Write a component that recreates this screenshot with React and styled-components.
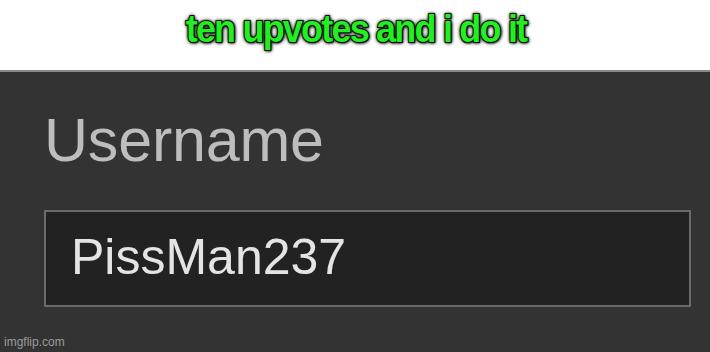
import React from "react";
import styled, { createGlobalStyle } from "styled-components";

const Global = createGlobalStyle`
  html, body { margin: 0; padding: 0; background: #333333; }
  body { width: 710px; height: 352px; overflow: hidden; }
`;

const Frame = styled.div`
  width: 710px;
  height: 352px;
  display: flex;
  flex-direction: column;
  background: #333333;
  position: relative;
  overflow: hidden;
`;

const Header = styled.div`
  background: #ffffff;
  display: flex;
  justify-content: center;
  align-items: flex-start;
  border-bottom: 2px solid #8a8a8a;
  box-sizing: border-box;
  height: 72px;
`;

const Caption = styled.div`
  margin-top: 8px;
  margin-left: 2px;
  font-family: "Liberation Sans Narrow", "Liberation Sans", sans-serif;
  font-weight: 700;
  font-size: 36px;
  letter-spacing: -1.8px;
  color: #22ee22;
  -webkit-text-stroke: 2px #0a2a0a;
  paint-order: stroke fill;
  text-shadow: 0 0 3px #000, 0 0 4px #000, 1px 1px 3px #000;
  white-space: nowrap;
  transform: scaleY(1.08);
`;

const Panel = styled.div`
  flex: 1;
  display: flex;
  flex-direction: column;
  padding: 38px 19px 0 44px;
`;

const Label = styled.div`
  font-family: "Liberation Sans", Arial, sans-serif;
  font-size: 61px;
  line-height: 1;
  color: #bdbdbd;
  letter-spacing: -0.2px;
`;

const Field = styled.div`
  margin-top: 39px;
  height: 97px;
  box-sizing: border-box;
  background: #222222;
  border: 2px solid #6a6a6a;
  display: flex;
  align-items: center;
  padding-left: 25px;
  font-family: "Liberation Sans", Arial, sans-serif;
  font-size: 50px;
  color: #e4e4e4;
  padding-bottom: 4px;
`;

const Watermark = styled.div`
  position: absolute;
  left: 4px;
  bottom: 3px;
  font-family: "Liberation Sans", Arial, sans-serif;
  font-size: 12px;
  color: #9a9a9a;
`;

export default function App() {
  return (
    <Frame>
      <Global />
      <Header>
        <Caption>ten upvotes and i do it</Caption>
      </Header>
      <Panel>
        <Label>Username</Label>
        <Field>PissMan237</Field>
      </Panel>
      <Watermark>imgflip.com</Watermark>
    </Frame>
  );
}
